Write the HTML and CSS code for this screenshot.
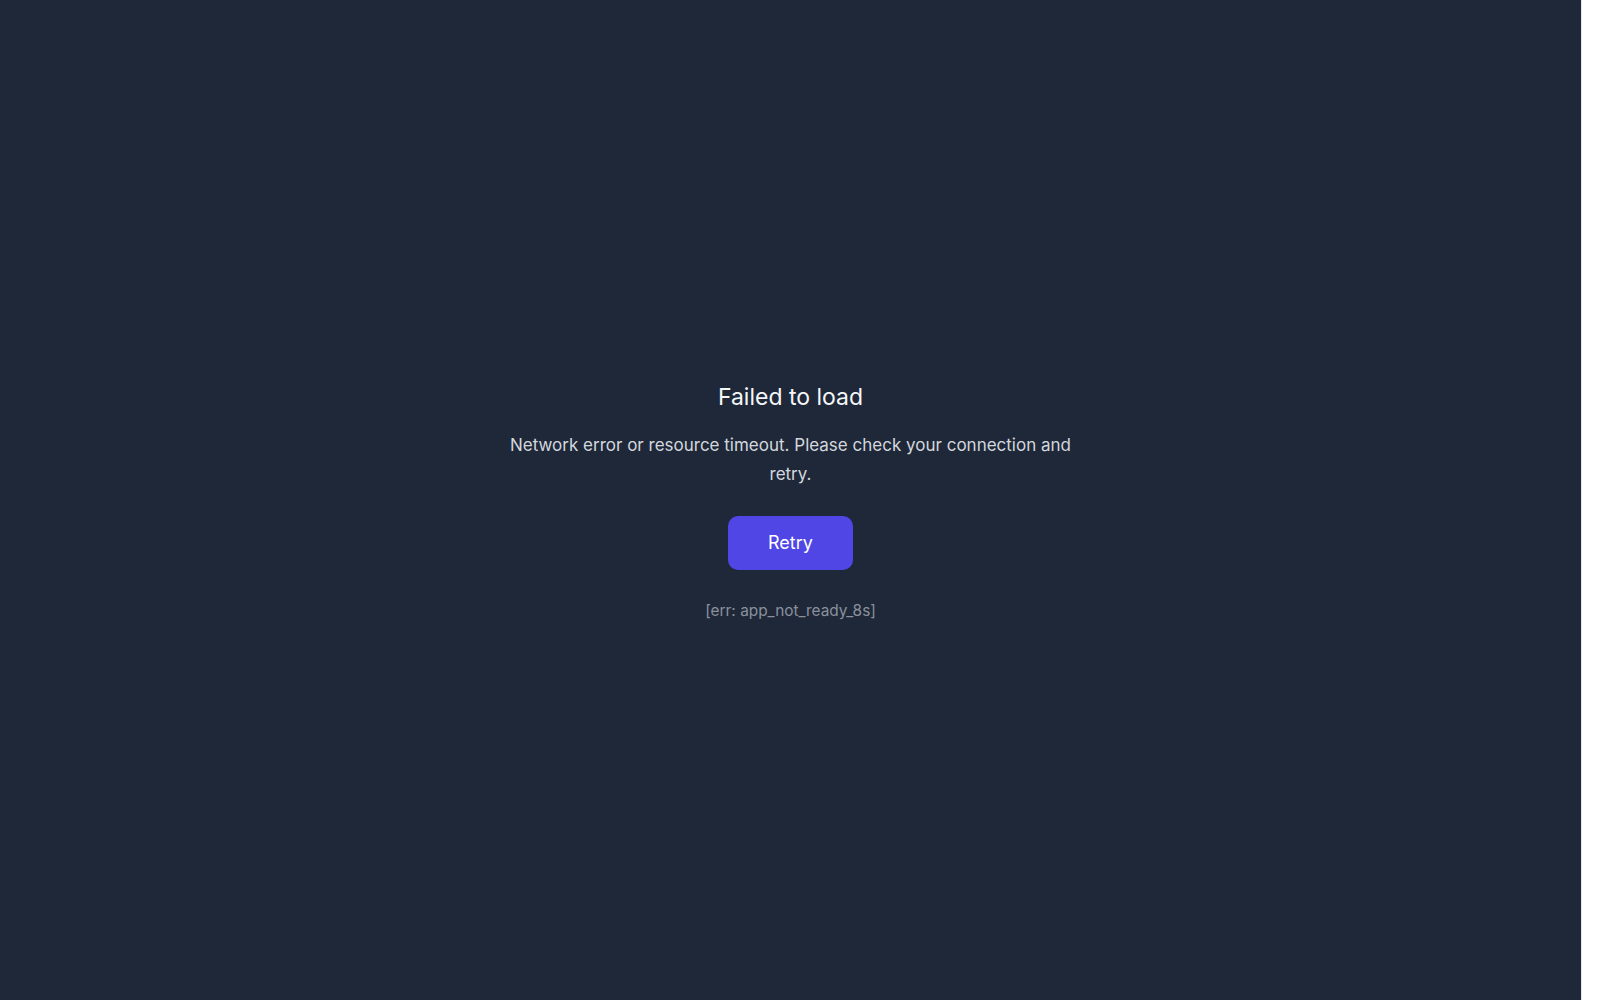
FILE: index.html
```html
<!DOCTYPE html>
<html lang="en">
<head>
<meta charset="utf-8">
<title>Failed to load</title>
<link rel="stylesheet" href="styles.css">
</head>
<body>
<div class="app">
  <main class="stage">
    <section class="error">
      <h1 class="error-title">Failed to load</h1>
      <p class="error-text">Network error or resource timeout. Please check your connection and retry.</p>
      <button class="retry" type="button">Retry</button>
      <p class="error-code">[err: app_not_ready_8s]</p>
    </section>
  </main>
  <div class="gutter"></div>
</div>
</body>
</html>
```

FILE: styles.css
```css
* { box-sizing: border-box; }
html, body { margin: 0; padding: 0; height: 100%; }
body {
  font-family: Inter, "Noto Sans", "Liberation Sans", sans-serif;
  background: #ffffff;
}
.app {
  display: flex;
  height: 100vh;
}
.stage {
  flex: 1;
  background: #1f2838;
  display: flex;
  align-items: center;
  justify-content: center;
}
.gutter {
  width: 19px;
  background: #ffffff;
  border-left: 1px solid #e6e6e6;
}
.error {
  display: flex;
  flex-direction: column;
  align-items: center;
  text-align: center;
  max-width: 600px;
  margin-top: 2px;
}
.error-title {
  margin: 0;
  font-size: 23px;
  line-height: 32px;
  font-weight: 400;
  color: #f5f6f8;
}
.error-text {
  margin: 18px 0 0;
  font-size: 17px;
  line-height: 29px;
  color: #d3d7de;
}
.retry {
  margin-top: 27px;
  height: 54px;
  padding: 0 40px;
  border: none;
  border-radius: 10px;
  background: #4f46e5;
  color: #ffffff;
  font-family: inherit;
  font-size: 18px;
  line-height: 26px;
  cursor: pointer;
}
.error-code {
  margin: 31px 0 0;
  font-size: 15.4px;
  line-height: 20px;
  color: #8a919d;
}
```
